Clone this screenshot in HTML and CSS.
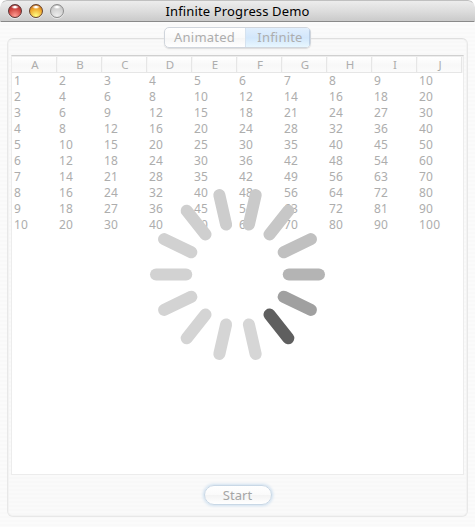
FILE: index.html
```html
<!DOCTYPE html>
<html lang="en">
<head>
<meta charset="utf-8">
<title>Infinite Progress Demo</title>
<link rel="stylesheet" href="styles.css">
</head>
<body>
<div class="window">
  <header class="titlebar">
    <div class="lights"><i class="light red"></i><i class="light amber"></i><i class="light gray"></i></div>
    <h1>Infinite Progress Demo</h1>
  </header>
  <main class="content">
    <section class="pane">
      <nav class="tabs"><span class="tab first">Animated</span><span class="tab selected">Infinite</span></nav>
      <div class="sheet">
        <div class="grid head" id="head"></div>
        <div class="grid body" id="body"></div>
      </div>
      <div class="actions"><button class="start">Start</button></div>
    </section>
  </main>
  <svg class="spinner" id="spinner" viewBox="-88 -88 176 176"></svg>
</div>
<script src="app.js"></script>
</body>
</html>
```
FILE: styles.css
```css
* { box-sizing: border-box; }
html { background: #fff; }
body { margin: 0; font-family: "Noto Sans", "Open Sans", sans-serif; }
.window {
  position: relative;
  display: flex;
  flex-direction: column;
  width: 475px;
  height: 527px;
  overflow: hidden;
  border-radius: 7px 7px 0 0;
}
.titlebar {
  position: relative;
  flex: 0 0 22px;
  border: 1px solid transparent;
  border-top-color: #c0c0c0;
  border-bottom-color: #898989;
  border-radius: 7px 7px 0 0;
  background: linear-gradient(#eeeeee, #dfdfdf 45%, #c8c8c8) border-box;
}
.titlebar h1 {
  margin: 0;
  font-size: 13px;
  font-weight: 400;
  line-height: 20px;
  letter-spacing: 0.13px;
  text-align: center;
  color: #000;
}
.lights { position: absolute; left: 7px; top: 3px; display: flex; gap: 7px; }
.light {
  width: 14px;
  height: 14px;
  border-radius: 50%;
  border: 1px solid #5b3434;
  box-shadow: 0 1px 0 rgba(255,255,255,.55);
}
.red { background: radial-gradient(ellipse 4px 2px at 50% 17%, #fff 30%, transparent), radial-gradient(circle at 50% 90%, #ff9d94, #d24a44 55%, #8e1c1b); }
.amber { border-color: #67432d; background: radial-gradient(ellipse 4px 2px at 50% 17%, #fff 30%, transparent), radial-gradient(circle at 50% 90%, #ffff83, #efa52b 60%, #a5490d); }
.gray { border-color: #8d8d8d; background: radial-gradient(ellipse 4px 2px at 50% 17%, #fff 30%, transparent), radial-gradient(circle at 50% 90%, #eee, #cecece 65%, #aaa); }
.content {
  flex: 1;
  padding: 16px 7px 10px;
  background: repeating-linear-gradient(#fbfbfb 0 2px, #f9f9f9 2px 4px);
}
.pane {
  display: flex;
  flex-direction: column;
  align-items: center;
  width: 461px;
  height: 479px;
  border: 1px solid #e8e8e8;
  border-top-color: #dfdfdf;
  border-radius: 6px;
  box-shadow: inset 0 0 0 1px #f3f3f3;
  background: repeating-linear-gradient(#fafafa 0 2px, #f8f8f8 2px 4px);
}
.tabs {
  display: flex;
  flex: 0 0 21px;
  width: 147px;
  margin-top: -12px;
  border: 1px solid #d0d5dc;
  border-radius: 5px;
  overflow: hidden;
  background: linear-gradient(#fff, #fafafa 50%, #f5f5f5 51%, #fff);
  box-shadow: 0 1px 1px #dcdcdc;
}
.tab {
  width: 65px;
  font-size: 13px;
  line-height: 19px;
  letter-spacing: 0.2px;
  text-align: center;
  color: #adadad;
}
.tab.first { width: 80px; padding-right: 1px; }
.tab.selected {
  padding-left: 5px;
  background: linear-gradient(#e1effd, #d4e7fb 48%, #d2e7fb 52%, #e8f7ff);
  box-shadow: inset 1px 0 #d5e2ef, inset -1px 0 #b9cce2;
}
.sheet {
  flex: 0 0 420px;
  width: 453px;
  margin-top: 7px;
  border: 1px solid #ececec;
  border-top-color: #d0d0d0;
  background: #fff;
}
.grid { display: grid; grid-template-columns: repeat(10, 45px); color: #adadad; }
.head {
  height: 17px;
  border-top: 1px solid #ededed;
  background: linear-gradient(#fff, #f8f8f8 50%, #fcfcfc);
}
.head span {
  padding-left: 2px;
  border-right: 1px solid #e6e6e6;
  border-bottom: 1px solid #e6e6e6;
  box-shadow: 1px 0 #f6f6f6;
  font-size: 11.5px;
  line-height: 15px;
  text-align: center;
}
.body { grid-auto-rows: 16px; }
.body span { padding-left: 2px; font-size: 12px; line-height: 15px; letter-spacing: 0.25px; }
.actions { display: flex; justify-content: center; padding-top: 10px; }
.start {
  width: 68px;
  height: 20px;
  padding: 0;
  border: 1px solid #c9d8e6;
  border-radius: 10px;
  background: linear-gradient(#fff, #fafafa 48%, #f3f3f3 50%, #fff);
  box-shadow: 0 0 3px 1px #cfe0f0;
  font: 13px/17px "Noto Sans", "Open Sans", sans-serif;
  letter-spacing: 0.1px;
  color: #a5a5a5;
}
.spinner { position: absolute; left: 149px; top: 186px; width: 177px; height: 177px; }
```
FILE: app.js
```js
const cell = (parent, text) => {
  const span = document.createElement('span');
  span.textContent = text;
  parent.appendChild(span);
};
const head = document.getElementById('head');
const body = document.getElementById('body');
for (const letter of 'ABCDEFGHIJ') cell(head, letter);
for (let r = 1; r <= 10; r++) for (let c = 1; c <= 10; c++) cell(body, r * c);

// Bar shades, counter-clockwise from the darkest one
const shades = ['#5f5f5f', '#a0a0a0', '#b4b4b4', '#c0c0c0', '#c7c7c7', '#cacaca', '#cdcdcd',
  '#cfcfcf', '#d1d1d1', '#d2d2d2', '#d3d3d3', '#d4d4d4', '#d5d5d5', '#d6d6d6'];
const spinner = document.getElementById('spinner');
shades.forEach((shade, i) => {
  const bar = document.createElementNS('http://www.w3.org/2000/svg', 'rect');
  const attrs = { x: 45, y: -6, width: 42, height: 12, rx: 6, fill: shade,
    transform: `rotate(${(2 - i) * 360 / 14})` };
  for (const key in attrs) bar.setAttribute(key, attrs[key]);
  spinner.appendChild(bar);
});
```
